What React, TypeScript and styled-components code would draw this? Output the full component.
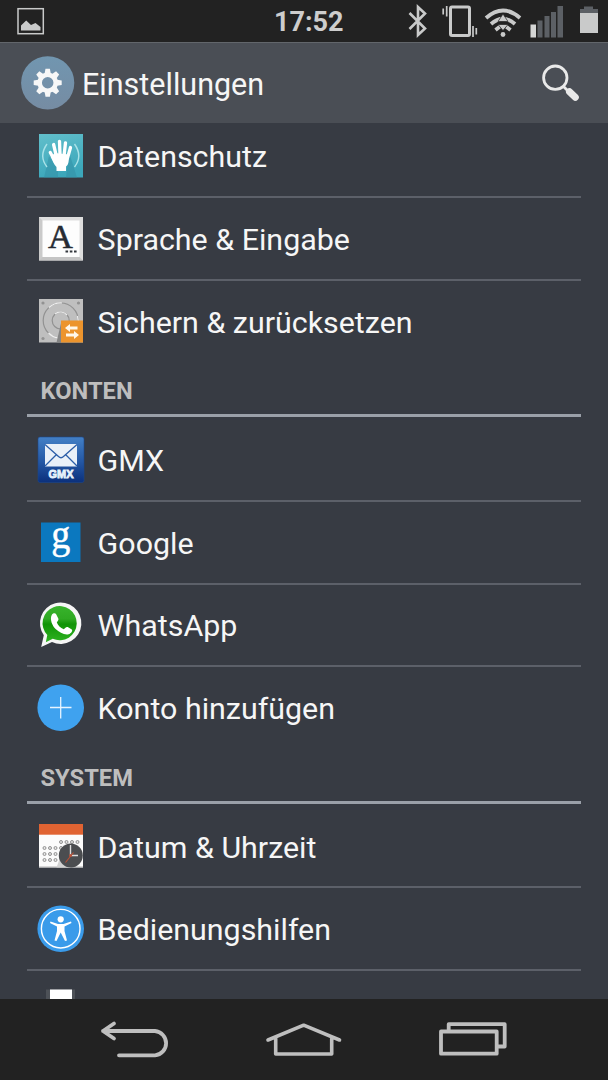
import React from 'react';
import styled, { createGlobalStyle } from 'styled-components';

const GlobalStyle = createGlobalStyle`
    body{
        margin: 0;
        background: #222222;
        font-family: Roboto, "Liberation Sans", sans-serif;
    }
`;

const Screen = styled.div`
    display: flex;
    flex-direction: column;
    width: 608px;
    height: 1080px;
    overflow: hidden;
    background: #373b43;
    color: #f6f6f6;
`;

const StatusBar = styled.div`
    box-sizing: border-box;
    display: flex;
    flex: none;
    align-items: center;
    height: 42px;
    padding: 0 10px 0 17px;
    background: #222222;
`;

const Clock = styled.span`
    margin-left: 229px;
    font-size: 27px;
    font-weight: 700;
    line-height: 30px;
    padding-top: 2px;
    color: #cdcdcd;
`;

const StatusIcons = styled.div`
    display: flex;
    align-items: center;
    margin-left: auto;
`;

const StatusIcon = styled.svg<{ $gap?: number }>`
    display: block;
    flex: none;
    margin-right: ${(p) => p.$gap || 0}px;
`;

const Header = styled.header`
    box-sizing: border-box;
    display: flex;
    flex: none;
    align-items: center;
    height: 81px;
    padding: 0 28px 0 20px;
    border-top: 1px solid #62666b;
    background: #4a4e55;
`;

const Title = styled.h1`
    flex: 1;
    margin: 0 0 0 5px;
    font-size: 30.5px;
    font-weight: 400;
    line-height: 40px;
    padding-top: 4px;
`;

const Content = styled.main`
    flex: 1;
    min-height: 0;
    overflow: hidden;
    padding: 0 27px;
`;

const List = styled.div`
    margin-top: -7.5px;
`;

const SectionTitle = styled.h2`
    box-sizing: border-box;
    height: 53.7px;
    margin: 0 0 2px;
    padding: 12.7px 0 0 13.5px;
    border-bottom: 3px solid #9aa0a9;
    color: #bebebe;
    font-size: 23.7px;
    font-weight: 700;
    line-height: 30px;
`;

const Row = styled.div<{ $last?: boolean }>`
    box-sizing: border-box;
    display: flex;
    align-items: center;
    height: 82.7px;
    padding-left: 10px;
    border-bottom: 2px solid ${(p) => (p.$last ? 'transparent' : '#5c6069')};
`;

const RowLabel = styled.span`
    margin-left: 12.6px;
    padding-top: 3px;
    font-size: 30.4px;
    line-height: 36px;
    white-space: nowrap;
`;

const RowIcon = styled.svg`
    display: block;
    flex: none;
    width: 48px;
    height: 48px;
    overflow: visible;
`;

const SerifGlyph = styled.text`
    font-family: "Liberation Serif", serif;
    text-anchor: middle;
`;

const NavBar = styled.nav`
    display: flex;
    flex: none;
    height: 81px;
    padding: 0 95px;
    align-items: center;
    justify-content: space-between;
    background: #222222;
`;

function PrivacyIcon() {
    return (
        <RowIcon viewBox="0 0 48 48">
            <defs>
                <linearGradient id="privacy" x1="0" y1="0" x2="0.3" y2="1">
                    <stop offset="0" stopColor="#62bfcb" />
                    <stop offset="1" stopColor="#3ca7bb" />
                </linearGradient>
            </defs>
            <rect x="2" y="2" width="44" height="43.5" fill="url(#privacy)" />
            <path d="M12 24 L21 38 V45.5 H7 Z M32 20 L40 45.5 H29 Z" fill="#338fa6" opacity="0.55" />
            <path d="M10 12 Q1.5 24 10 35 M37.5 12 Q46 24 37.5 35" fill="none" stroke="#a9e2e8" strokeWidth="1.4" />
            <g fill="none" stroke="#ffffff" strokeWidth="3.3" strokeLinecap="round">
                <path d="M19.3 24 L16.6 12.5 M23 23 L22.5 9.3 M27 24 L28.5 10.8 M30.5 26 L33.5 15.5" />
                <path d="M18.5 30 L13.3 20.5" />
            </g>
            <path d="M17.6 21 L32 22.5 C32 29 31.5 33 29 34.5 V39 H19.5 V35 C17 33 15.5 28.5 14 25 Z" fill="#ffffff" />
        </RowIcon>
    );
}

function LanguageIcon() {
    return (
        <RowIcon viewBox="0 0 48 48">
            <rect x="2" y="2" width="44" height="43.5" fill="#dedede" />
            <path d="M2 2 L6 6 V42 L2 45.5 Z" fill="#cacaca" />
            <path d="M2 45.5 L6 41.5 H42 L46 45.5 Z" fill="#c4c4c4" />
            <rect x="5.5" y="5.5" width="37" height="36.5" fill="#fdfdfd" />
            <SerifGlyph x="23.5" y="32.8" fontSize="34.5" fill="#262b33" stroke="#262b33" strokeWidth="0.5">A</SerifGlyph>
            <path d="M28.5 36.5 h2.6 M32.8 36.5 h2.6 M37 36.5 h2.6" stroke="#33373d" strokeWidth="2.2" />
        </RowIcon>
    );
}

function BackupIcon() {
    return (
        <RowIcon viewBox="0 0 48 48">
            <rect x="2" y="2" width="44" height="43.5" fill="#bfbfbf" />
            <g fill="#929292">
                <circle cx="6" cy="6" r="1.6" />
                <circle cx="41.5" cy="6" r="1.6" />
                <circle cx="6" cy="41.5" r="1.6" />
            </g>
            <g fill="none" strokeWidth="1.2">
                <circle cx="23.7" cy="23.5" r="17.5" stroke="#929292" />
                <circle cx="23.7" cy="23.5" r="8.5" stroke="#929292" />
                <path d="M12 10.5 A17.5 17.5 0 0 1 25 6 M36 36 A17.5 17.5 0 0 0 40.5 19 M11.5 36 A17.5 17.5 0 0 0 21 41" stroke="#eeeeee" />
                <path d="M18 17 A8.5 8.5 0 0 1 30 18" stroke="#eeeeee" />
            </g>
            <path d="M24.5 24 L19.5 45.5 H24.5 Z" fill="#858585" />
            <rect x="24" y="23.5" width="22" height="22" fill="#ec942d" />
            <path d="M28 31 L33 27 V29.5 H40.5 V32.5 H33 V35 Z M42 38 L37 34 V36.5 H29 V39.5 H37 V42 Z" fill="#fff7ea" />
        </RowIcon>
    );
}

function GmxIcon() {
    return (
        <RowIcon viewBox="0 0 48 48">
            <defs>
                <linearGradient id="gmx" x1="0" y1="0" x2="0" y2="1">
                    <stop offset="0" stopColor="#4380c6" />
                    <stop offset="0.55" stopColor="#2457a4" />
                    <stop offset="1" stopColor="#0b307c" />
                </linearGradient>
            </defs>
            <rect x="1" y="1" width="46" height="45.5" rx="2" fill="url(#gmx)" stroke="#1b478c" strokeWidth="0.6" />
            <rect x="8" y="8" width="32" height="22.5" fill="#e9f0f8" />
            <path d="M8 8.5 L21.5 20.5 Q24 23 26.5 20.5 L40 8.5 M8 30 L19 19 M40 30 L29 19" fill="none" stroke="#2c5ea8" strokeWidth="1.3" />
            <text x="24" y="42" textAnchor="middle" fontFamily="'Liberation Sans', sans-serif" fontWeight="700" fontSize="11" textLength="25" lengthAdjust="spacingAndGlyphs" fill="#e7f2fb" stroke="#e7f2fb" strokeWidth="0.8">GMX</text>
        </RowIcon>
    );
}

function GoogleIcon() {
    return (
        <RowIcon viewBox="0 0 48 48">
            <rect x="4" y="4.5" width="39.5" height="39.5" fill="#0b78bf" />
            <SerifGlyph x="23.7" y="30" fontSize="41" fill="#ffffff" stroke="#ffffff" strokeWidth="0.5" textLength="19" lengthAdjust="spacingAndGlyphs">g</SerifGlyph>
        </RowIcon>
    );
}

function WhatsAppIcon() {
    return (
        <RowIcon viewBox="0 0 48 48">
            <defs>
                <linearGradient id="whatsapp" x1="0" y1="0" x2="0" y2="1">
                    <stop offset="0" stopColor="#38b32c" />
                    <stop offset="0.35" stopColor="#2fa922" />
                    <stop offset="0.5" stopColor="#109306" />
                    <stop offset="1" stopColor="#2fb321" />
                </linearGradient>
            </defs>
            <path d="M4.2 46 L6.8 34.2 A20.7 20.7 0 1 1 15 41 Z" fill="#f6f6f6" />
            <path d="M8.8 41.3 L10.3 34 A17.1 17.1 0 1 1 15.7 37.8 Z" fill="url(#whatsapp)" />
            <path d="M15 13.5 C16 12.2 18.2 11.8 19 13 L21.3 17.5 C22 19 20.5 20.2 19.8 21.4 C21 24.2 23.3 26.8 26.8 28.2 C28.2 27.4 29.2 25.4 30.7 26.1 L34.8 28.4 C36 29.5 34.3 32.4 31.6 33.2 C27.5 34.2 22.3 31.5 18.6 28 C15.5 25 12.2 18.2 15 13.5 Z" fill="#ffffff" />
        </RowIcon>
    );
}

function AddIcon() {
    return (
        <RowIcon viewBox="0 0 48 48">
            <circle cx="23.7" cy="23.7" r="23.3" fill="#3fa2ef" />
            <path d="M13 23.5 H34.5 M23.7 13 V34.5" stroke="#e6f4ff" strokeWidth="1.3" />
        </RowIcon>
    );
}

function DateIcon() {
    const dots: number[][] = [];
    [20, 26, 32].forEach((y, row) => {
        [7.5, 13, 18.5, 24, 29.5, 35, 40.5].forEach((x, col) => {
            if (row === 0 ? col > 2 : col < 4) dots.push([x, y]);
        });
    });
    dots.push([7.5, 38], [13, 38], [18.5, 38]);
    return (
        <RowIcon viewBox="0 0 48 48">
            <rect x="2" y="2" width="44" height="43.5" fill="#fbfbfb" />
            <rect x="2" y="2" width="44" height="10.7" fill="#e06332" />
            <path d="M2 44.8 H46" stroke="#c9c9c9" strokeWidth="1" />
            <path d="M23 36 L19.5 45.5 H34 Z" fill="#d2d2d2" />
            {dots.map(([x, y]) => (
                <circle key={`${x}-${y}`} cx={x} cy={y} r="1.5" fill="#e5e5e5" stroke="#929292" strokeWidth="1" />
            ))}
            <circle cx="33.8" cy="33.5" r="12" fill="#4b4d50" />
            <path d="M33.5 23 V33.5 H41" fill="none" stroke="#dcdcdc" strokeWidth="1.4" />
            <path d="M36.5 30.5 L28.5 40.5" stroke="#b75037" strokeWidth="1.2" />
            <circle cx="33.5" cy="33.5" r="1.5" fill="#b75037" />
        </RowIcon>
    );
}

function AccessibilityIcon() {
    return (
        <RowIcon viewBox="0 0 48 48">
            <circle cx="23.7" cy="23.7" r="23.3" fill="#3a9bea" />
            <circle cx="23.7" cy="23.7" r="19.3" fill="none" stroke="#ffffff" strokeWidth="1.4" />
            <circle cx="23.7" cy="14.3" r="3.1" fill="#ffffff" />
            <path d="M13.5 16.5 L21 19 H26.5 L34 16.5 L34.5 18 L27.5 21.5 V26 L30 35.5 L28 36 L23.7 27.5 L19.5 36 L17.5 35.5 L20 26 V21.5 L13 18 Z" fill="#ffffff" />
        </RowIcon>
    );
}

function PrinterIcon() {
    return (
        <RowIcon viewBox="0 0 48 48">
            <rect x="9" y="2.5" width="29" height="20" fill="#4d5157" />
            <rect x="13" y="2.5" width="22" height="20" fill="#ffffff" />
        </RowIcon>
    );
}

function Gear() {
    return (
        <svg width="57" height="57" viewBox="0 0 57 57">
            <defs>
                <linearGradient id="gear" x1="0" y1="0" x2="0" y2="1">
                    <stop offset="0" stopColor="#7196b0" />
                    <stop offset="1" stopColor="#768ca3" />
                </linearGradient>
            </defs>
            <circle cx="27.7" cy="27.8" r="26.6" fill="url(#gear)" />
            <g transform="translate(27.7 27.8)" fill="#f7f7f7">
                {[0, 45, 90, 135, 180, 225, 270, 315].map((a) => (
                    <path key={a} d="M-3.3 -8 L-2.2 -14 H2.2 L3.3 -8 Z" transform={`rotate(${a})`} />
                ))}
                <circle r="8" fill="none" stroke="#f7f7f7" strokeWidth="4.5" />
            </g>
        </svg>
    );
}

function StatusRow() {
    return (
        <StatusBar>
            <StatusIcon width="28" height="28" viewBox="0 0 28 28">
                <rect x="1" y="1.7" width="25.3" height="25" fill="none" stroke="#c9caca" strokeWidth="1.5" />
                <path d="M4 23.5 V18.5 L9.2 13.5 L14 18 L18.5 16 L23.5 20 V23.5 Z" fill="#c9caca" />
            </StatusIcon>
            <Clock>17:52</Clock>
            <StatusIcons>
                <StatusIcon $gap={14} width="20" height="34" viewBox="0 0 20 34">
                    <path d="M1.5 9 L17 24.5 L10 31 V3 L17 9.5 L1.5 25" fill="none" stroke="#c9caca" strokeWidth="2.6" />
                </StatusIcon>
                <StatusIcon $gap={6} width="36" height="34" viewBox="0 0 36 34">
                    <rect x="8.5" y="3" width="19" height="28.5" rx="1.5" fill="none" stroke="#c9caca" strokeWidth="3" />
                    <path d="M1.2 4.5 V10.5 M4.7 2 V12.5 M31 22 V33 M34.3 24 V30.5" stroke="#c9caca" strokeWidth="1.7" />
                </StatusIcon>
                <StatusIcon $gap={8} width="38" height="34" viewBox="0 0 38 34">
                    <g fill="none" stroke="#c9caca" strokeWidth="3.8">
                        <path d="M2 14 Q19 -1 36 14" />
                        <path d="M7 20 Q19 9.5 31 20" />
                        <path d="M11.5 26 L16 22.5 M26.5 26 L22 22.5" />
                    </g>
                    <path d="M14 17.5 L19 10 L24 17.5 Z M14 20.5 H24 L19 26.5 Z" fill="#c9caca" stroke="#222222" strokeWidth="0.7" />
                    <circle cx="19" cy="30.5" r="2.4" fill="#c9caca" />
                </StatusIcon>
                <StatusIcon $gap={15} width="34" height="34" viewBox="0 0 34 34">
                    <rect x="0.5" y="20.5" width="5.5" height="13" fill="#d5d6d5" />
                    <path d="M7.5 33.5 V16.5 H12.5 V33.5 Z M14.5 33.5 V12 H19.5 V33.5 Z M21 33.5 V8 H26 V33.5 Z M27.5 33.5 V2 H33 V33.5 Z" fill="#5c6065" />
                </StatusIcon>
                <StatusIcon width="19" height="34" viewBox="0 0 19 34">
                    <path d="M1 10 V5 H5 V2.5 H14 V5 H19 V10 Z" fill="#5c6065" />
                    <rect x="1" y="9" width="18" height="20" fill="#c9caca" />
                </StatusIcon>
            </StatusIcons>
        </StatusBar>
    );
}

type Item = {
    label: string;
    icon: React.ReactNode;
};

type GroupProps = {
    title?: string;
    items: Item[];
};

const generalItems: Item[] = [
    { label: 'Datenschutz', icon: <PrivacyIcon /> },
    { label: 'Sprache & Eingabe', icon: <LanguageIcon /> },
    { label: 'Sichern & zurücksetzen', icon: <BackupIcon /> },
];

const accountItems: Item[] = [
    { label: 'GMX', icon: <GmxIcon /> },
    { label: 'Google', icon: <GoogleIcon /> },
    { label: 'WhatsApp', icon: <WhatsAppIcon /> },
    { label: 'Konto hinzufügen', icon: <AddIcon /> },
];

const systemItems: Item[] = [
    { label: 'Datum & Uhrzeit', icon: <DateIcon /> },
    { label: 'Bedienungshilfen', icon: <AccessibilityIcon /> },
    { label: '', icon: <PrinterIcon /> },
];

function Group(props: GroupProps) {
    return (
        <>
            {props.title && <SectionTitle>{props.title}</SectionTitle>}
            {props.items.map((item, i) => (
                <Row key={item.label} $last={i === props.items.length - 1}>
                    {item.icon}
                    {item.label && <RowLabel>{item.label}</RowLabel>}
                </Row>
            ))}
        </>
    );
}

function App() {
    return (
        <Screen>
            <GlobalStyle />
            <StatusRow />
            <Header>
                <Gear />
                <Title>Einstellungen</Title>
                <svg width="40" height="40" viewBox="0 0 40 40">
                    <circle cx="15.3" cy="14.7" r="11.7" fill="none" stroke="#e9e9e9" strokeWidth="2.8" />
                    <path d="M23.5 23.5 L28 28" stroke="#e9e9e9" strokeWidth="2.8" />
                    <path d="M29.5 28.7 L35.3 34.3" stroke="#e9e9e9" strokeWidth="7" strokeLinecap="round" />
                </svg>
            </Header>
            <Content>
                <List>
                    <Group items={generalItems} />
                    <Group title="KONTEN" items={accountItems} />
                    <Group title="SYSTEM" items={systemItems} />
                </List>
            </Content>
            <NavBar>
                <svg width="80" height="51" viewBox="95 1014 80 51" fill="none" stroke="#bfbfbf" strokeWidth="3.8" strokeLinecap="round" strokeLinejoin="round">
                    <path d="M103 1031 H155 A12.2 12.2 0 0 1 155 1055.3 H119 M114 1023.5 L103 1031 L114 1038.5" />
                    <path d="M104 1031 L109 1028 V1034 Z" fill="#bfbfbf" stroke="none" />
                </svg>
                <svg width="80" height="51" viewBox="264 1014 80 51" fill="none" stroke="#bfbfbf" strokeWidth="3.6" strokeLinecap="round" strokeLinejoin="round">
                    <path d="M268 1040 L303.7 1025.2 L339.5 1040 M275.7 1038.5 V1054 H331.7 V1038.5" />
                </svg>
                <svg width="80" height="51" viewBox="433 1014 80 51" fill="none" stroke="#bfbfbf" strokeWidth="3.8" strokeLinejoin="round">
                    <path d="M441 1031.5 H496.7 V1053.7 H441 Z M448.7 1030 V1024.2 H504.7 V1046.5 H498" />
                </svg>
            </NavBar>
        </Screen>
    );
}

export default App;
